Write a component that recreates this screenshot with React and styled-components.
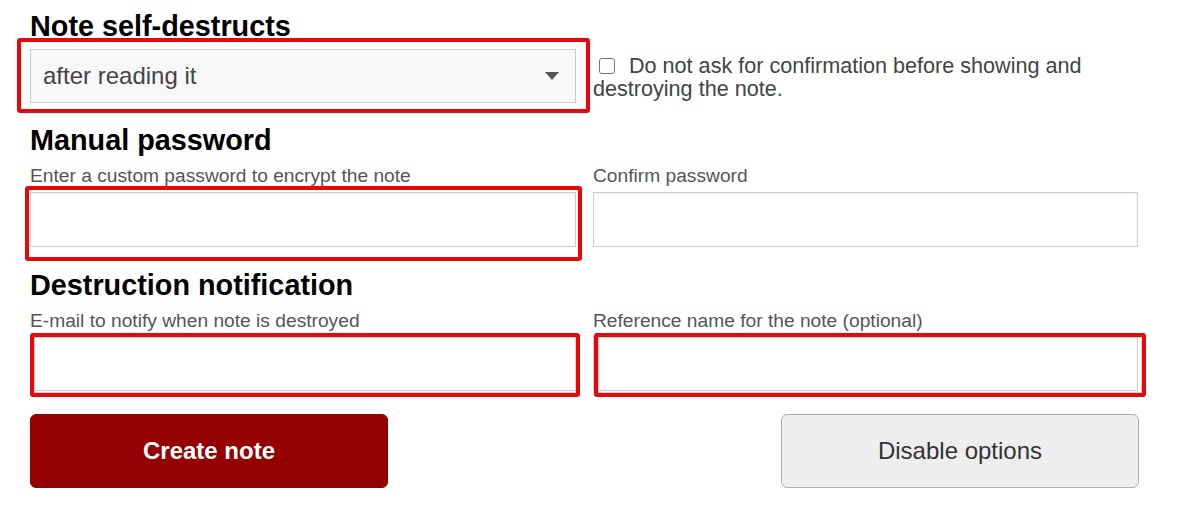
import React from 'react';
import styled, {createGlobalStyle} from 'styled-components';

const GlobalStyle = createGlobalStyle`
    body {
        margin: 0;
        background: #fff;
        font-family: 'Liberation Sans', Arial, sans-serif;
    }
`;

const Page = styled.div`
    width: 1109px;
    padding: 9px 0 0 30px;
`;

const Heading = styled.h2`
    margin: ${props => props.$mt || 0}px 0 ${props => props.$mb || 0}px 0;
    font-size: 28.8px;
    line-height: 34px;
    font-weight: bold;
    color: #000;
`;

const Row = styled.div`
    display: grid;
    grid-template-columns: 546px 545px;
    column-gap: 17px;
    align-items: start;
`;

const Field = styled.div`
    display: flex;
    flex-direction: column;
`;

const Label = styled.label`
    font-size: 19.2px;
    line-height: 22px;
    color: #555;
    margin-bottom: ${props => props.$mb || 5}px;
`;

// red highlight drawn over a control
const Framed = styled.div`
    position: relative;
`;

const RedFrame = styled.div`
    position: absolute;
    top: ${props => props.$t}px;
    right: ${props => props.$r}px;
    bottom: ${props => props.$b}px;
    left: ${props => props.$l}px;
    border: 4px solid #e8060b;
    border-radius: 3px;
    pointer-events: none;
    ${props => props.$inner ? 'box-shadow: inset 0 0 0 1px #d2d2d2;' : ''}
`;

const SelectBox = styled.div`
    box-sizing: border-box;
    height: 54px;
    display: flex;
    align-items: center;
    justify-content: space-between;
    padding: 0 16px 0 12px;
    background: #f8f8f8;
    border: 1px solid #ccc;
    font-size: 24px;
    color: #444;
`;

const Caret = styled.span`
    width: 0;
    height: 0;
    border-left: 7px solid transparent;
    border-right: 7px solid transparent;
    border-top: 8px solid #555;
`;

const TextInput = styled.input`
    box-sizing: border-box;
    display: block;
    width: 100%;
    height: 55px;
    margin: 0;
    padding: 6px 12px;
    border: 1px solid #ccc;
    background: #fff;
    box-shadow: inset 0 1px 2px rgba(0, 0, 0, 0.08);
    font-family: inherit;
    font-size: 20px;
    outline: none;
`;

const CheckLine = styled.label`
    display: block;
    padding-top: 5px;
    font-size: 21.6px;
    line-height: 23px;
    color: #444;
`;

const CheckBox = styled.span`
    display: inline-block;
    box-sizing: border-box;
    width: 16px;
    height: 16px;
    margin: 0 14px 0 6px;
    border: 1.5px solid #767676;
    border-radius: 3px;
    background: #fff;
    vertical-align: -1px;
`;

const Actions = styled.div`
    display: flex;
    justify-content: space-between;
    margin-top: 23px;
    width: 1109px;
`;

const Button = styled.button`
    box-sizing: border-box;
    width: 358px;
    height: 74px;
    border-radius: 6px;
    font-family: inherit;
    font-size: 24px;
    font-weight: ${props => props.$primary ? 'bold' : 'normal'};
    color: ${props => props.$primary ? '#fff' : '#333'};
    background: ${props => props.$primary ? '#950000' : '#eee'};
    border: 1px solid ${props => props.$primary ? '#950000' : '#adadad'};
    cursor: pointer;
`;

export default function App() {
    return (
        <Page>
            <GlobalStyle />
            <Heading $mb={6}>Note self-destructs</Heading>
            <Row>
                <Framed>
                    <SelectBox>
                        <span>after reading it</span>
                        <Caret />
                    </SelectBox>
                    <RedFrame $t={-11} $r={-14} $b={-10} $l={-13} />
                </Framed>
                <CheckLine>
                    <CheckBox />
                    Do not ask for confirmation before showing and destroying the note.
                </CheckLine>
            </Row>

            <Heading $mt={20} $mb={8}>Manual password</Heading>
            <Row>
                <Field>
                    <Label>Enter a custom password to encrypt the note</Label>
                    <Framed>
                        <TextInput type="password" />
                        <RedFrame $t={-6} $r={-6} $b={-14} $l={-5} />
                    </Framed>
                </Field>
                <Field>
                    <Label>Confirm password</Label>
                    <TextInput type="password" />
                </Field>
            </Row>

            <Heading $mt={21} $mb={8}>Destruction notification</Heading>
            <Row>
                <Field>
                    <Label $mb={4}>E-mail to notify when note is destroyed</Label>
                    <Framed>
                        <TextInput type="email" />
                        <RedFrame $t={-3} $r={-4} $b={-6} $l={0} $inner />
                    </Framed>
                </Field>
                <Field>
                    <Label $mb={4}>Reference name for the note (optional)</Label>
                    <Framed>
                        <TextInput type="text" />
                        <RedFrame $t={-3} $r={-8} $b={-6} $l={1} $inner />
                    </Framed>
                </Field>
            </Row>

            <Actions>
                <Button $primary>Create note</Button>
                <Button>Disable options</Button>
            </Actions>
        </Page>
    );
}
